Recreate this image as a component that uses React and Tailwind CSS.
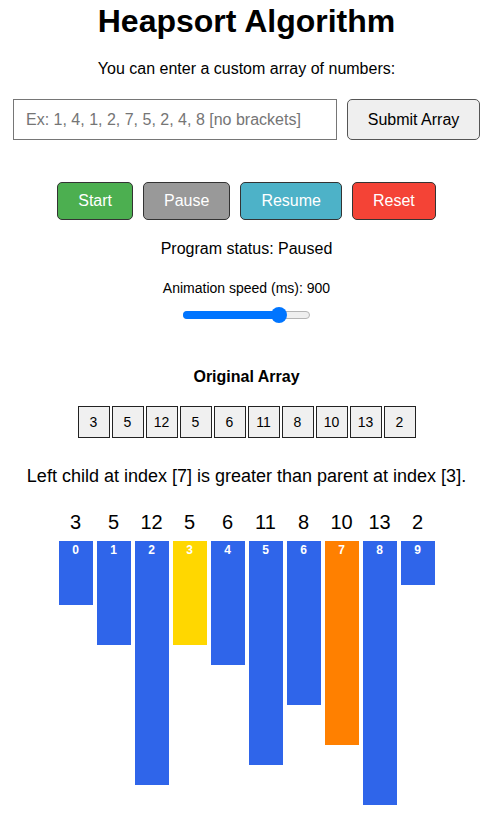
const values = [3, 5, 12, 5, 6, 11, 8, 10, 13, 2]

function barColor(i) {
  if (i === 3) return 'bg-[#ffd700]'
  if (i === 7) return 'bg-[#ff8000]'
  return 'bg-[#2f65ea]'
}

function ControlButton({ label, className }) {
  return (
    <button
      type="button"
      className={`h-[38px] rounded-[5px] border border-[#333] px-5 text-[16px] text-white ${className}`}
    >
      {label}
    </button>
  )
}

export default function App() {
  return (
    <div
      className="w-[493px] pt-[3px] text-black"
      style={{ fontFamily: '"Liberation Sans", Arial, sans-serif' }}
    >
      <h1 className="text-center text-[32px] font-bold leading-[37px]">
        Heapsort Algorithm
      </h1>
      <p className="mt-[20px] text-center text-[16px] leading-[18px]">
        You can enter a custom array of numbers:
      </p>

      <div className="mt-[21px] flex justify-center gap-[10px]">
        <input
          type="text"
          placeholder="Ex: 1, 4, 1, 2, 7, 5, 2, 4, 8 [no brackets]"
          className="h-[41px] w-[324px] border border-[#767676] bg-white px-[12px] text-[16px] outline-none placeholder:text-[#757575]"
        />
        <button
          type="button"
          className="h-[41px] w-[133px] rounded-[5px] border border-[#555] bg-[#efefef] text-[16px] text-black"
        >
          Submit Array
        </button>
      </div>

      <div className="mt-[42px] flex justify-center gap-[10px]">
        <ControlButton label="Start" className="bg-[#4caf50]" />
        <ControlButton label="Pause" className="bg-[#999999]" />
        <ControlButton label="Resume" className="bg-[#4db2c8]" />
        <ControlButton label="Reset" className="bg-[#f44336]" />
      </div>

      <p className="mt-[20px] text-center text-[16px] leading-[18px]">
        Program status: Paused
      </p>
      <p className="mt-[22px] text-center text-[14px] leading-[16px]">
        Animation speed (ms): 900
      </p>

      <div className="mt-[11px] flex justify-center">
        <div className="relative h-[16px] w-[127px]">
          <div className="absolute inset-x-0 top-[4px] h-[8px] rounded-full border border-[#b5b5b5] bg-[#efefef]" />
          <div className="absolute left-0 top-[4px] h-[8px] w-[97px] rounded-full bg-[#0075ff]" />
          <div className="absolute left-[88px] top-0 h-[16px] w-[16px] rounded-full bg-[#0075ff]" />
        </div>
      </div>

      <h3 className="mt-[45px] text-center text-[16px] font-bold leading-[18px]">
        Original Array
      </h3>
      <div className="mt-[20px] flex justify-center gap-[2px]">
        {values.map((v, i) => (
          <div
            key={i}
            className="flex h-[32px] w-[32px] items-center justify-center border border-[#222] bg-[#f0f0f0] text-[14px]"
          >
            {v}
          </div>
        ))}
      </div>

      <p className="mt-[28px] text-center text-[18px] leading-[21px]">
        Left child at index [7] is greater than parent at index [3].
      </p>

      <div className="mt-[24px] flex items-start justify-center gap-[4px]">
        {values.map((v, i) => (
          <div key={i} className="flex w-[34px] flex-col items-center">
            <span className="text-[20px] leading-[23px]">{v}</span>
            <div
              className={`mt-[7px] w-[34px] pt-[2px] text-center text-[12px] font-bold leading-[14px] text-white ${barColor(i)}`}
              style={{ height: v * 20 + 4 }}
            >
              {i}
            </div>
          </div>
        ))}
      </div>
    </div>
  )
}
